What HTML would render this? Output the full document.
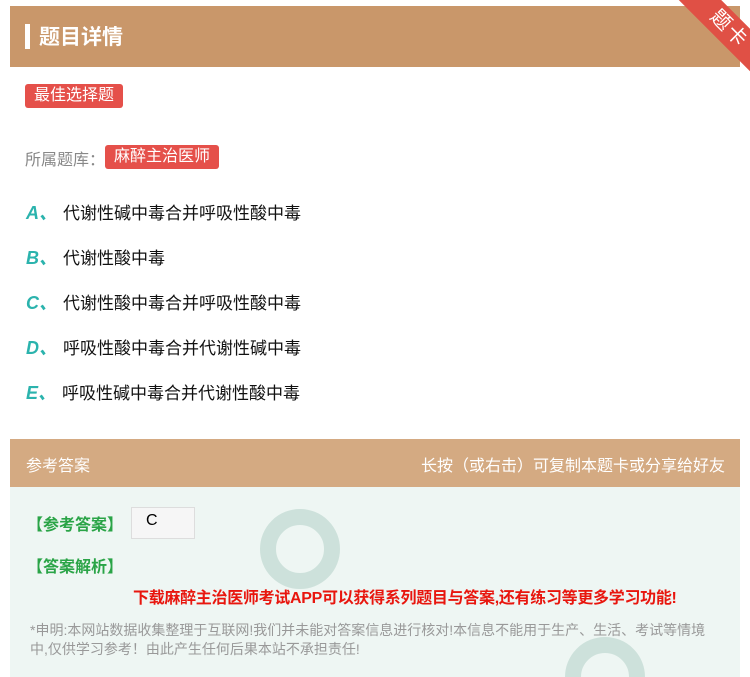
<!DOCTYPE html>
<html><head><meta charset="utf-8"><style>
*{margin:0;padding:0;box-sizing:border-box}
html,body{width:750px;height:677px;overflow:hidden}
body{background:#fff;font-family:"Liberation Sans","Noto Sans CJK SC",sans-serif;position:relative}
.hd{position:absolute;left:10px;top:6px;width:730px;height:61px;background:#c9976a}
.hd .bar{position:absolute;left:15px;top:18px;width:5px;height:25px;background:#fff}
.hd .t{position:absolute;left:29px;top:15px;font-size:21px;font-weight:bold;color:#fff}
.rib{position:absolute;right:0;top:0;width:100px;height:90px;overflow:hidden}
.rib div{position:absolute;left:14px;top:14px;width:130px;height:30px;background:#e05045;transform:rotate(45deg);color:#fff;font-size:20px;text-align:center;line-height:30px;letter-spacing:2px}
.tag{position:absolute;background:#e5504a;color:#fff;font-size:16px;border-radius:3px;padding:0 9px;height:24px;line-height:23px}
.lbl{position:absolute;left:25px;top:146px;font-size:16px;color:#888}
.opt{position:absolute;left:26px;font-size:17px;color:#111}
.opt b{color:#2bb3ad;font-style:italic;font-size:18px;margin-right:6px}
.ah{position:absolute;left:10px;top:439px;width:730px;height:48px;background:#d4aa82;color:#fff;font-size:16px}
.ab{position:absolute;left:10px;top:487px;width:730px;height:190px;background:#eef6f3;overflow:hidden}
.g{position:absolute;color:#2aa447;font-size:16px;font-weight:bold}
</style></head><body>
<div class="hd"><div class="bar"></div><div class="t">题目详情</div></div>
<div class="rib"><div>题卡</div></div>
<div class="tag" style="left:25px;top:84px">最佳选择题</div>
<div class="lbl">所属题库：</div>
<div class="tag" style="left:105px;top:145px">麻醉主治医师</div>
<div class="opt" style="top:199px"><b>A、</b>代谢性碱中毒合并呼吸性酸中毒</div>
<div class="opt" style="top:244px"><b>B、</b>代谢性酸中毒</div>
<div class="opt" style="top:289px"><b>C、</b>代谢性酸中毒合并呼吸性酸中毒</div>
<div class="opt" style="top:334px"><b>D、</b>呼吸性酸中毒合并代谢性碱中毒</div>
<div class="opt" style="top:379px"><b>E、</b>呼吸性碱中毒合并代谢性酸中毒</div>
<div class="ah"><span style="position:absolute;left:16px;top:13px">参考答案</span><span style="position:absolute;right:15px;top:13px">长按（或右击）可复制本题卡或分享给好友</span></div>
<div class="ab">
<div style="position:absolute;left:250px;top:22px;width:80px;height:80px;border-radius:50%;border:16px solid #bfd9d0;opacity:.7"></div>
<div style="position:absolute;left:555px;top:150px;width:80px;height:80px;border-radius:50%;border:16px solid #bfd9d0;opacity:.7"></div>
</div>
<div class="g" style="left:27px;top:511px">【参考答案】</div>
<div style="position:absolute;left:131px;top:507px;width:64px;height:32px;background:#f6f6f6;border:1px solid #ddd;font-size:16px;padding:4px 0 0 14px">C</div>
<div class="g" style="left:27px;top:553px">【答案解析】</div>
<div style="position:absolute;left:133px;top:584px;color:#e8160e;font-size:16px;font-weight:bold;letter-spacing:-0.3px">下载麻醉主治医师考试APP可以获得系列题目与答案,还有练习等更多学习功能!</div>
<div style="position:absolute;left:30px;top:621px;width:690px;color:#999;font-size:14px;line-height:19px">*申明:本网站数据收集整理于互联网!我们并未能对答案信息进行核对!本信息不能用于生产、生活、考试等情境中,仅供学习参考！由此产生任何后果本站不承担责任!</div>
</body></html>
